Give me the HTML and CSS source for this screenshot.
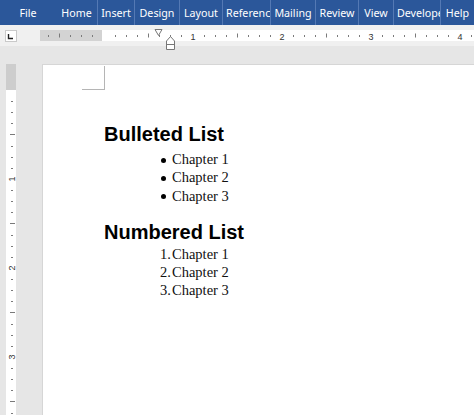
FILE: index.html
```html
<!DOCTYPE html>
<html lang="en">
<head>
<meta charset="utf-8">
<title>Document</title>
<link rel="stylesheet" href="styles.css">
</head>
<body>
<div class="app">
  <nav class="tabs">
    <span class="tab">File</span>
    <span class="tab">Home</span>
    <span class="tab sep">Insert</span>
    <span class="tab sep">Design</span>
    <span class="tab sep">Layout</span>
    <span class="tab sep">References</span>
    <span class="tab sep">Mailing</span>
    <span class="tab sep">Review</span>
    <span class="tab sep">View</span>
    <span class="tab sep">Developer</span>
    <span class="tab sep">Help</span>
  </nav>

  <div class="ruler-row">
    <div class="tab-selector">
      <svg width="12" height="12" viewBox="0 0 12 12">
        <rect x="0.5" y="0.5" width="11" height="11" fill="#fff" stroke="#c9c9c9"/>
        <path d="M3.5 4 V8.5 H8" fill="none" stroke="#222" stroke-width="1.4"/>
      </svg>
    </div>
    <svg class="hruler" width="434" height="11" viewBox="0 0 434 11">
      <rect width="62" height="11" fill="#d3d3d3"/>
      <rect x="62" width="372" height="11" fill="#fff"/>
      <g fill="#7a7a7a">
        <rect x="8" y="5" width="1" height="2"/><rect x="30" y="5" width="1" height="2"/><rect x="41" y="5" width="1" height="2"/><rect x="52" y="5" width="1" height="2"/>
        <rect x="75" y="5" width="1" height="2"/><rect x="86" y="5" width="1" height="2"/><rect x="97" y="5" width="1" height="2"/><rect x="119" y="5" width="1" height="2"/><rect x="130" y="5" width="1" height="2"/><rect x="141" y="5" width="1" height="2"/>
        <rect x="164" y="5" width="1" height="2"/><rect x="175" y="5" width="1" height="2"/><rect x="186" y="5" width="1" height="2"/><rect x="208" y="5" width="1" height="2"/><rect x="219" y="5" width="1" height="2"/><rect x="230" y="5" width="1" height="2"/>
        <rect x="253" y="5" width="1" height="2"/><rect x="264" y="5" width="1" height="2"/><rect x="275" y="5" width="1" height="2"/><rect x="297" y="5" width="1" height="2"/><rect x="308" y="5" width="1" height="2"/><rect x="319" y="5" width="1" height="2"/>
        <rect x="342" y="5" width="1" height="2"/><rect x="353" y="5" width="1" height="2"/><rect x="364" y="5" width="1" height="2"/><rect x="386" y="5" width="1" height="2"/><rect x="397" y="5" width="1" height="2"/><rect x="408" y="5" width="1" height="2"/>
        <rect x="431" y="5" width="1" height="2"/>
        <rect x="19" y="3.5" width="1" height="4"/><rect x="108" y="3.5" width="1" height="4"/><rect x="197" y="3.5" width="1" height="4"/><rect x="286" y="3.5" width="1" height="4"/><rect x="375" y="3.5" width="1" height="4"/>
      </g>
      <g class="ruler-num" text-anchor="middle">
        <text x="153" y="9.5">1</text>
        <text x="242" y="9.5">2</text>
        <text x="331" y="9.5">3</text>
        <text x="420" y="9.5">4</text>
      </g>
    </svg>
    <svg class="indents" width="30" height="24" viewBox="0 0 30 24">
      <path d="M5 1.5 H12 L8.5 7.5 Z" fill="#fff" stroke="#777"/>
      <path d="M16.5 13 L20.5 8.5 L24.5 13 V21.5 H16.5 Z" fill="#fff" stroke="#777"/>
      <path d="M16.5 16.5 H24.5" stroke="#777"/>
    </svg>
  </div>

  <div class="workspace">
    <div class="vcol">
      <svg class="vruler" width="10" height="351" viewBox="0 0 10 351">
        <rect width="10" height="26" fill="#cdcdcd"/>
        <rect y="26" width="10" height="325" fill="#fff"/>
        <g fill="#7a7a7a">
          <rect x="5" y="37" width="2" height="1"/><rect x="5" y="48" width="2" height="1"/><rect x="5" y="59" width="2" height="1"/><rect x="5" y="82" width="2" height="1"/><rect x="5" y="93" width="2" height="1"/><rect x="5" y="104" width="2" height="1"/>
          <rect x="5" y="126" width="2" height="1"/><rect x="5" y="137" width="2" height="1"/><rect x="5" y="148" width="2" height="1"/><rect x="5" y="171" width="2" height="1"/><rect x="5" y="182" width="2" height="1"/><rect x="5" y="193" width="2" height="1"/>
          <rect x="5" y="215" width="2" height="1"/><rect x="5" y="226" width="2" height="1"/><rect x="5" y="237" width="2" height="1"/><rect x="5" y="260" width="2" height="1"/><rect x="5" y="271" width="2" height="1"/><rect x="5" y="282" width="2" height="1"/>
          <rect x="5" y="304" width="2" height="1"/><rect x="5" y="315" width="2" height="1"/><rect x="5" y="326" width="2" height="1"/><rect x="5" y="349" width="2" height="1"/>
          <rect x="4" y="70" width="5" height="1"/><rect x="4" y="159" width="5" height="1"/><rect x="4" y="248" width="5" height="1"/><rect x="4" y="337" width="5" height="1"/>
        </g>
        <g class="ruler-num" text-anchor="middle">
          <text transform="translate(6 115) rotate(-90)" y="3">1</text>
          <text transform="translate(6 204) rotate(-90)" y="3">2</text>
          <text transform="translate(6 293) rotate(-90)" y="3">3</text>
        </g>
      </svg>
    </div>
    <main class="page">
      <div class="crop-mark"></div>
      <div class="content">
        <h2 class="heading">Bulleted List</h2>
        <ul class="list">
          <li><span class="mark"><span class="dot"></span></span><span>Chapter 1</span></li>
          <li><span class="mark"><span class="dot"></span></span><span>Chapter 2</span></li>
          <li><span class="mark"><span class="dot"></span></span><span>Chapter 3</span></li>
        </ul>
        <h2 class="heading heading-2">Numbered List</h2>
        <ol class="list list-num">
          <li><span class="mark">1.</span><span>Chapter 1</span></li>
          <li><span class="mark">2.</span><span>Chapter 2</span></li>
          <li><span class="mark">3.</span><span>Chapter 3</span></li>
        </ol>
      </div>
    </main>
  </div>
</div>
</body>
</html>
```

FILE: styles.css
```css
html, body {
  margin: 0;
  padding: 0;
}

body {
  width: 474px;
  height: 415px;
  overflow: hidden;
  background: #e6e6e6;
  font-family: "Noto Sans", "Open Sans", sans-serif;
}

.app {
  display: flex;
  flex-direction: column;
  height: 415px;
}

/* Ribbon tabs */
.tabs {
  display: grid;
  grid-template-columns: 56px 41px 37px 45px 43px 48px 45px 43px 35px 47px 34px;
  height: 25px;
  background: #2b579a;
  color: #fff;
  font-size: 10.7px;
  flex: none;
}

.tab {
  display: flex;
  align-items: center;
  justify-content: safe center;
  padding: 0 3px;
  overflow: hidden;
  white-space: nowrap;
}

.tab.sep {
  border-left: 1px solid #5479b4;
}

/* Ruler row */
.ruler-row {
  position: relative;
  display: flex;
  align-items: flex-start;
  gap: 23px;
  height: 21px;
  box-sizing: border-box;
  padding: 5px 0 0 5px;
  background: #f0f0f0;
  flex: none;
}

.tab-selector svg,
.hruler,
.vruler {
  display: block;
}

.ruler-num {
  font-family: "Liberation Sans", Arial, sans-serif;
  font-size: 9px;
  fill: #333;
}

.indents {
  position: absolute;
  left: 150px;
  top: 3px;
  overflow: visible;
}

/* Workspace */
.workspace {
  display: flex;
  flex: 1;
  padding-top: 18px;
  min-height: 0;
}

.vcol {
  width: 42px;
  flex: none;
  box-sizing: border-box;
  padding-left: 6px;
}

.page {
  flex: 1;
  background: #fff;
  border-top: 1px solid #d6d6d6;
  border-left: 1px solid #d6d6d6;
}

.crop-mark {
  margin: 1px 0 0 39px;
  width: 22px;
  height: 23px;
  border-right: 1px solid #b5b5b5;
  border-bottom: 1px solid #b5b5b5;
}

.content {
  padding-left: 61px;
  color: #000;
}

.heading {
  margin: 32px 0 0;
  font-family: "Liberation Sans", Arial, sans-serif;
  font-weight: bold;
  font-size: 20px;
  line-height: 24px;
}

.heading-2 {
  margin-top: 15px;
}

.list {
  list-style: none;
  margin: 4px 0 0;
  padding: 0 0 0 56px;
  font-family: "Liberation Serif", "Times New Roman", serif;
  font-size: 14.5px;
  line-height: 18.3px;
  color: #111;
}

.list-num {
  margin-top: 1px;
}

.list li {
  display: flex;
}

.mark {
  width: 12px;
  flex: none;
  display: flex;
  align-items: center;
}

.dot {
  display: block;
  width: 5px;
  height: 5px;
  margin: 2px 0 0 1px;
  border-radius: 50%;
  background: #000;
}
```
